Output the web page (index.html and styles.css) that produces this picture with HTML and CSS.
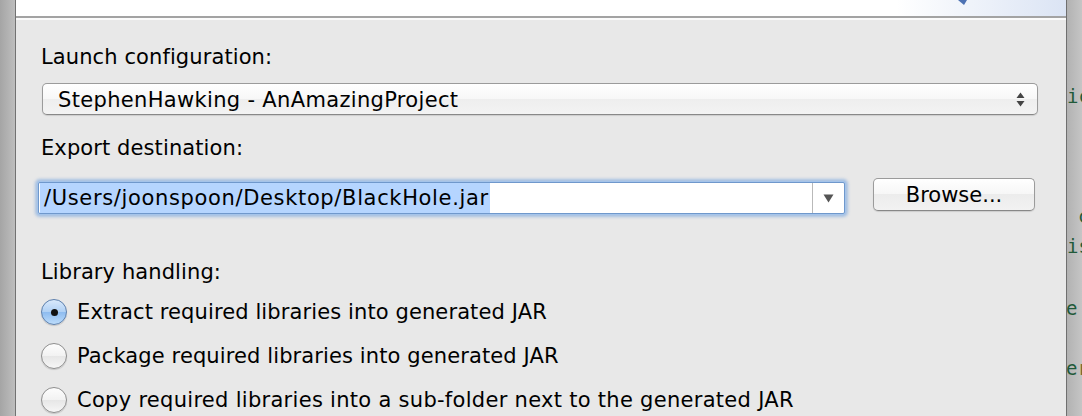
FILE: index.html
```html
<!DOCTYPE html>
<html>
<head>
<meta charset="utf-8">
<link rel="stylesheet" href="styles.css">
</head>
<body>
<div class="screen">
  <div class="edge-left"></div>
  <div class="dialog">
    <div class="titlebar">
      <svg class="tip" width="10" height="6" viewBox="0 0 10 6"><path d="M0 0 L9 0 L6 5 Z" fill="#4d72b3"/></svg>
    </div>
    <div class="content">
      <div class="label">Launch configuration:</div>
      <div class="popup">
        <span class="popup-text">StephenHawking - AnAmazingProject</span>
        <svg class="updown" width="9" height="15" viewBox="0 0 9 15"><path d="M4.5 0.5 L8.5 6 L0.5 6 Z M0.5 9 L8.5 9 L4.5 14.5 Z" fill="#444"/></svg>
      </div>
      <div class="label label-export">Export destination:</div>
      <div class="dest-row">
        <div class="combo">
          <div class="field"><span class="sel">/Users/joonspoon/Desktop/BlackHole.jar</span></div>
          <div class="drop"><svg width="11" height="9" viewBox="0 0 11 9"><path d="M0.5 0.5 L10.5 0.5 L5.5 8.5 Z" fill="#555"/></svg></div>
        </div>
        <div class="btn">Browse...</div>
      </div>
      <div class="label label-lib">Library handling:</div>
      <div class="radios">
        <div class="radio-row"><span class="radio on"></span>Extract required libraries into generated JAR</div>
        <div class="radio-row"><span class="radio"></span>Package required libraries into generated JAR</div>
        <div class="radio-row row-wide"><span class="radio"></span>Copy required libraries into a sub-folder next to the generated JAR</div>
      </div>
    </div>
  </div>
  <div class="edge-right">
    <span class="code c1">ic</span>
    <span class="code c2">c</span>
    <span class="code c3">is</span>
    <span class="code c4">e</span>
    <span class="code c5">e<span class="olive">r</span></span>
  </div>
</div>
</body>
</html>
```
FILE: styles.css
```css
html, body {
  margin: 0;
  padding: 0;
}
body {
  width: 1082px;
  height: 416px;
  overflow: hidden;
  background: #e8e8e8;
}
.screen {
  display: flex;
  width: 1082px;
  height: 416px;
  overflow: hidden;
  font-family: "DejaVu Sans", sans-serif;
  font-size: 21px;
  color: #000;
}
.edge-left {
  flex: none;
  width: 15px;
  background: linear-gradient(to right, #a5a5a5, #bebebe);
  border-right: 1px solid #727272;
}
.dialog {
  flex: 1;
  min-width: 0;
  display: flex;
  flex-direction: column;
  background: #e8e8e8;
}
.titlebar {
  flex: none;
  height: 16px;
  position: relative;
  background: linear-gradient(to right, #ffffff 0, #ffffff 880px, #dbe4f4 100%);
  border-bottom: 2px solid #a3a3a3;
}
.tip {
  position: absolute;
  left: 942px;
  top: 0;
}
.content {
  border-top: 2px solid #fbfbfb;
  padding: 25px 28px 0 22px;
  display: flex;
  flex-direction: column;
}
.label {
  line-height: 24px;
  margin-left: 3px;
  letter-spacing: 0.1px;
}
.popup {
  margin: 14px 0 0 4px;
  height: 32px;
  box-sizing: border-box;
  border: 1px solid #9b9b9b;
  border-bottom-color: #888;
  border-radius: 5px;
  background: linear-gradient(#ffffff, #f7f7f7 50%, #eeeeee 50%, #f3f3f3);
  box-shadow: 0 1px 1px rgba(0, 0, 0, 0.12);
  display: flex;
  align-items: center;
  justify-content: space-between;
  padding: 1px 12px 0 15px;
  line-height: 24px;
}
.popup-text {
  letter-spacing: 0.33px;
}
.label-export {
  margin-top: 21px;
}
.dest-row {
  margin-top: 18px;
  display: flex;
  align-items: flex-start;
}
.combo {
  margin-top: 4px;
  width: 807px;
  height: 32px;
  box-sizing: border-box;
  border: 1px solid #6f98cc;
  border-radius: 2px;
  box-shadow: 0 0 0 1px #a5c4ea, 0 0 3px 3px rgba(120, 165, 222, 0.6);
  display: flex;
  background: #fff;
}
.field {
  flex: 1;
  padding-left: 1px;
  display: flex;
}
.sel {
  display: inline-block;
  background: #b5d5ff;
  line-height: 30px;
  padding: 0 1px 0 4px;
  letter-spacing: 0.65px;
}
.drop {
  flex: none;
  width: 31px;
  border-left: 1px solid #b9b9b9;
  display: flex;
  align-items: center;
  justify-content: center;
}
.btn {
  margin-left: 28px;
  width: 162px;
  height: 33px;
  box-sizing: border-box;
  border: 1px solid #9b9b9b;
  border-bottom-color: #888;
  border-radius: 5px;
  background: linear-gradient(#ffffff, #f6f6f6 50%, #ececec 50%, #f2f2f2);
  box-shadow: 0 1px 1px rgba(0, 0, 0, 0.12);
  display: flex;
  align-items: center;
  justify-content: center;
  line-height: 24px;
}
.label-lib {
  margin-top: 46px;
}
.radios {
  margin-top: 6px;
  margin-left: 3px;
  display: flex;
  flex-direction: column;
}
.radio-row {
  height: 44px;
  display: flex;
  align-items: center;
  line-height: 24px;
  white-space: nowrap;
  letter-spacing: 0.11px;
}
.radio-row.row-wide {
  letter-spacing: 0.29px;
}
.radio {
  flex: none;
  width: 26px;
  height: 26px;
  box-sizing: border-box;
  border-radius: 50%;
  margin-right: 10px;
  border: 1px solid #8e8e8e;
  background: linear-gradient(#fdfdfd, #f2f2f2 50%, #e6e6e6 50%, #f6f6f6);
  box-shadow: 0 1px 1px rgba(0, 0, 0, 0.15);
  display: flex;
  align-items: center;
  justify-content: center;
}
.radio.on {
  border-color: #5d80ad;
  background: linear-gradient(#d9e9fb, #afd0f4 50%, #8dbbef 50%, #bcdcfb);
}
.radio.on::after {
  content: "";
  width: 7px;
  height: 7px;
  border-radius: 50%;
  background: #111;
}
.edge-right {
  flex: none;
  width: 15px;
  position: relative;
  overflow: hidden;
  border-left: 1px solid #6f6f6f;
  background: linear-gradient(to right, #b2b2b2, #c5c5c5);
  font-family: "DejaVu Sans Mono", monospace;
  font-size: 19px;
  line-height: 19px;
  color: #1f5a39;
}
.code {
  position: absolute;
  white-space: nowrap;
}
.c1 { top: 87px; left: 0; }
.c2 { top: 207px; left: 11px; }
.c3 { top: 237px; left: 0; }
.c4 { top: 299px; left: -1px; }
.c5 { top: 359px; left: -1px; }
.olive { color: #7a6a2c; }
```
